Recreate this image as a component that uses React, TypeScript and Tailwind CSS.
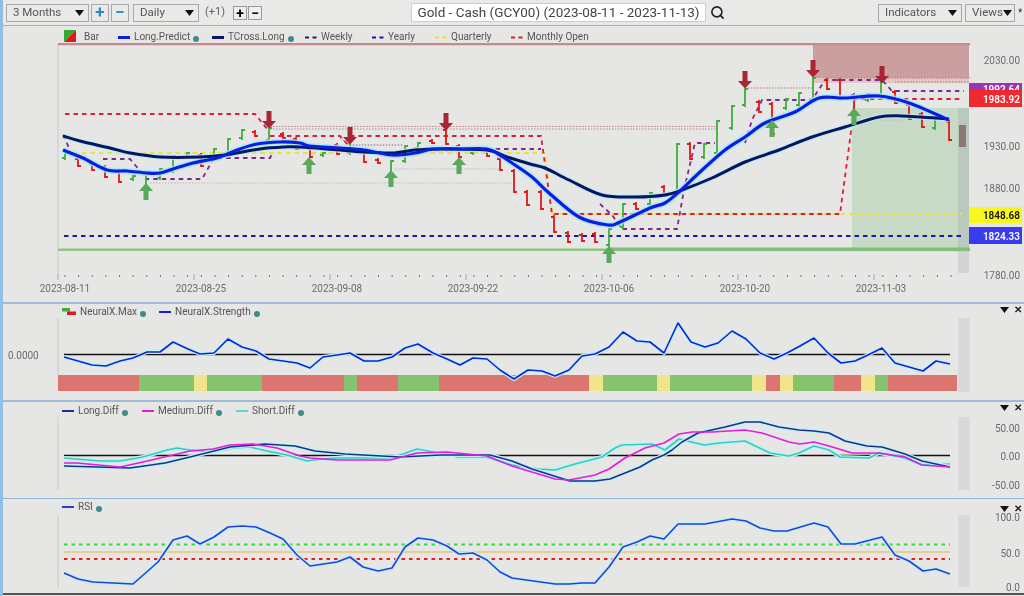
import React from 'react';
import { Search } from 'lucide-react';

// [x, high, low, colour] in page pixels
const bars: [number, number, number, 'g' | 'r'][] = [
  [65, 152, 160, 'g'], [78, 157, 167, 'r'], [92, 162, 171, 'r'], [105, 165, 178, 'r'], [119, 169, 183, 'r'],
  [133, 175, 181, 'g'], [146, 172, 190, 'g'], [160, 168, 180, 'g'], [173, 155, 173, 'g'], [187, 152, 159, 'g'],
  [201, 153, 167, 'r'], [214, 148, 158, 'g'], [228, 138, 158, 'g'], [242, 129, 140, 'g'], [255, 130, 137, 'r'],
  [269, 127, 142, 'g'], [283, 132, 139, 'r'], [296, 137, 150, 'r'], [310, 147, 158, 'r'], [323, 152, 157, 'g'],
  [337, 143, 155, 'r'], [350, 137, 155, 'g'], [364, 150, 163, 'r'], [378, 158, 164, 'r'], [391, 160, 178, 'g'],
  [405, 145, 163, 'g'], [418, 142, 150, 'g'], [432, 139, 144, 'r'], [446, 128, 145, 'r'], [459, 144, 158, 'r'],
  [473, 147, 155, 'g'], [487, 149, 157, 'r'], [500, 157, 171, 'r'], [514, 169, 193, 'r'], [527, 190, 206, 'r'],
  [541, 190, 210, 'r'], [554, 215, 233, 'r'], [568, 231, 243, 'r'], [582, 233, 242, 'r'], [595, 232, 243, 'r'],
  [609, 228, 247, 'g'], [623, 203, 229, 'g'], [636, 202, 210, 'r'], [650, 192, 206, 'g'], [664, 185, 197, 'r'],
  [677, 143, 197, 'g'], [690, 142, 160, 'r'], [704, 143, 159, 'g'], [717, 120, 155, 'g'], [732, 105, 130, 'g'],
  [745, 88, 107, 'g'], [759, 100, 113, 'r'], [772, 102, 135, 'r'], [786, 98, 110, 'g'], [799, 92, 107, 'g'],
  [813, 77, 101, 'g'], [827, 78, 90, 'r'], [840, 78, 100, 'r'], [854, 93, 125, 'r'], [868, 93, 102, 'g'],
  [881, 80, 97, 'g'], [895, 90, 104, 'r'], [909, 103, 120, 'r'], [922, 112, 128, 'r'], [935, 117, 130, 'g'],
  [949, 120, 141, 'r'],
];

const longPredict = '63,150 83,158 107,170 127,171 147,173 160,173 173,169 193,163 217,158 237,150 257,144 280,142 300,143 310,146 340,148 364,150 392,155 415,153 433,149 460,149 487,149 500,155 512,163 532,177 549,193 579,217 608,225 620,222 650,208 665,203 680,191 700,172 725,150 745,137 765,123 795,112 819,98 845,98 879,96 909,103 949,120';
const tCross = '63,136 80,141 110,148 130,153 160,157 200,157 225,155 260,149 285,147 300,147 340,150 364,152 392,153 415,150 440,149 487,150 507,157 530,164 545,168 569,180 602,195 635,197 665,195 682,190 712,178 745,162 779,150 812,137 845,127 879,117 902,116 949,119';
const neural = '64,357 92,365 106,366 120,361 133,358 147,352 160,352 173,342 188,349 200,354 214,353 228,339 242,347 256,351 269,359 283,361 297,363 310,368 323,357 337,355 350,353 364,361 378,361 392,357 405,348 418,344 433,353 447,359 460,365 473,358 487,359 500,370 514,379 528,370 542,371 555,376 569,370 582,356 595,354 609,347 623,332 637,341 650,342 664,353 678,323 691,342 705,347 718,343 732,331 746,339 760,353 774,359 787,353 800,346 814,338 828,353 841,363 855,361 868,355 882,348 895,363 909,367 923,371 936,361 950,364';
const longDiff = '64,466 130,468 165,463 190,457 230,447 265,444 295,446 315,451 345,454 400,457 440,455 490,455 512,461 532,469 570,481 595,481 610,479 640,467 652,460 664,455 672,450 682,442 698,433 725,427 745,422 760,422 779,427 799,430 814,431 829,433 845,441 867,446 882,447 905,454 922,461 950,467';
const mediumDiff = '64,463 77,463 120,467 143,462 173,455 190,451 213,449 230,445 253,444 277,448 300,456 310,458 337,460 390,460 417,453 447,452 487,456 512,466 555,479 569,480 595,475 609,469 625,458 645,448 664,443 679,434 692,432 712,432 745,430 762,433 789,442 800,444 814,442 829,446 852,453 879,453 905,457 922,465 950,467';
const shortDiff = '64,458 100,461 120,461 143,457 167,450 177,448 190,450 213,452 233,448 250,447 267,451 287,455 307,461 320,459 337,458 390,458 403,454 417,449 433,452 457,457 487,457 512,465 539,469 555,470 575,464 602,457 615,448 622,445 652,444 665,450 679,439 704,445 719,443 745,441 770,453 789,456 799,453 814,446 829,450 840,457 869,458 879,453 905,458 922,465 950,464';
const rsi = '64,574 78,580 93,583 133,585 158,563 173,541 187,537 200,545 214,538 228,528 242,527 256,528 270,534 283,540 297,556 310,567 337,563 350,558 363,568 378,572 392,569 405,548 418,539 433,541 447,547 459,555 473,554 487,561 500,573 512,579 555,585 569,585 582,584 595,584 609,568 623,548 637,543 650,537 664,540 678,525 705,525 732,520 746,522 760,529 774,532 787,532 814,524 828,528 841,545 855,545 882,538 895,556 909,562 923,572 936,570 950,575';

const strip: [number, number, string][] = [
  [58, 139, '#dc7470'], [139, 194, '#84c46e'], [194, 207, '#efe58a'], [207, 262, '#84c46e'], [262, 344, '#dc7470'],
  [344, 357, '#84c46e'], [357, 398, '#dc7470'], [398, 439, '#84c46e'], [439, 589, '#dc7470'], [589, 603, '#efe58a'],
  [603, 657, '#84c46e'], [657, 670, '#efe58a'], [670, 752, '#84c46e'], [752, 766, '#efe58a'], [766, 780, '#dc7470'],
  [780, 793, '#efe58a'], [793, 834, '#84c46e'], [834, 861, '#dc7470'], [861, 875, '#efe58a'], [875, 888, '#84c46e'],
  [888, 957, '#dc7470'],
];

const dates: [number, string][] = [
  [65, '2023-08-11'], [201, '2023-08-25'], [337, '2023-09-08'], [473, '2023-09-22'], [609, '2023-10-06'], [745, '2023-10-20'], [881, '2023-11-03'],
];

const minorTicks = Array.from({ length: 66 }, (_, i) => 65 + i * 13.63);

// catmull-rom through the points, the two moving averages are smooth in the chart
const smooth = (points: string) => {
  const p = points.split(' ').map((s) => s.split(',').map(Number));
  let d = `M${p[0][0]} ${p[0][1]}`;
  for (let i = 0; i < p.length - 1; i++) {
    const a = p[i - 1] ?? p[i];
    const b = p[i];
    const c = p[i + 1];
    const e = p[i + 2] ?? c;
    d += `C${b[0] + (c[0] - a[0]) / 6} ${b[1] + (c[1] - a[1]) / 6} ${c[0] - (e[0] - b[0]) / 6} ${c[1] - (e[1] - b[1]) / 6} ${c[0]} ${c[1]}`;
  }
  return d;
};

const UpArrow = ({ x, y }: { x: number; y: number }) => (
  <path d={`M${x} ${y}l7 8h-4.5v9h-5v-9h-4.5z`} fill="#5aa85a" />
);
const DownArrow = ({ x, y }: { x: number; y: number }) => (
  <path d={`M${x - 2.5} ${y}h5v10h4.5l-7 7.5l-7 -7.5h4.5z`} fill="#a82535" />
);

const Caret = () => (
  <svg width="9" height="6" viewBox="0 0 9 6" className="shrink-0">
    <path d="M0 0h9L4.5 6z" fill="#111" />
  </svg>
);

const Select = ({ label, className }: { label: string; className: string }) => (
  <div className={`flex h-[18px] items-center justify-between border border-[#a9a9a9] bg-[#e9e9e7] pl-[6px] pr-[4px] text-[11.5px] text-[#555] ${className}`}>
    <span>{label}</span>
    <Caret />
  </div>
);

const Dot = () => <span className="ml-[3px] mt-[4px] h-[6px] w-[6px] rounded-full bg-[#3f8a8a]" />;

const LineKey = ({ className }: { className: string }) => <span className={`mr-[4px] w-[12px] ${className}`} />;
const DashKey = ({ color }: { color: string }) => (
  <svg width="12" height="3" className="mr-[4px]"><line x1="0" x2="12" y1="1.5" y2="1.5" stroke={color} strokeWidth="2" strokeDasharray="4 3.5" /></svg>
);

const PanelControls = () => (
  <div className="ml-auto mr-[2px] flex items-center gap-[5px] self-start pt-[3px]">
    <Caret />
    <span className="text-[10px] font-bold leading-none text-[#222]">✕</span>
  </div>
);

const Line = ({ points, color, width = 1.6 }: { points: string; color: string; width?: number }) => (
  <>
    <polyline points={points} fill="none" stroke="#bff3f3" strokeWidth={width + 2.4} strokeLinejoin="round" />
    <polyline points={points} fill="none" stroke={color} strokeWidth={width} strokeLinejoin="round" />
  </>
);

const AxisText = ({ y, children }: { y: number; children: string }) => (
  <text x="1020" y={y} textAnchor="end" fontSize="10" fill="#6b6b6b">{children}</text>
);

const MainChart = () => (
  <svg width="1021" height="259" viewBox="3 43 1021 259" className="block">
    <rect x="813" y="45" width="156" height="33" fill="#cb9fa0" />
    <rect x="813" y="78" width="156" height="5" fill="#e0c6c6" />
    <rect x="852" y="108" width="117" height="141" fill="#c7dac5" />
    <rect x="958" y="108" width="11" height="141" fill="#b9c9bd" />
    <rect x="958" y="249" width="11" height="24" fill="#d3d3d3" />
    <rect x="959" y="125" width="7" height="22" fill="#8c7676" />
    <line x1="58" x2="58" y1="45" y2="276" stroke="#c8c8c8" />
    <line x1="58" x2="970" y1="44" y2="44" stroke="#c9868d" strokeWidth="2.4" />

    {/* levels */}
    <g fill="none" strokeWidth="1" strokeDasharray="1.5 1.5">
      <path d="M270 126.5H716M270 129H716" stroke="#b88" />
      <path d="M745 88H813M825 78H970M895 82H970" stroke="#b77" />
      <path d="M150 183H513M395 169H500M850 120H905" stroke="#b9bfb0" />
      <path d="M340 138L350 145H403" stroke="#968" />
    </g>
    <g fill="none" strokeWidth="1.8" strokeDasharray="4.5 4">
      <path d="M65 153H545L552 213" stroke="#e6e62c" />
      <path d="M552 214H962" stroke="#efe23a" />
      <path d="M64 236H964" stroke="#1a1aa8" />
      <path d="M65 114H255L268 130M270 136H340L350 147M350 136H541L552 214H840L849 147L855 99H962" stroke="#d91e35" />
      <path d="M63 135L70 150M103 159H130L147 179H202L214 158H270L273 152M487 149H541M600 204L612 215L622 229H677L684 190L695 143H715M745 143L752 120L762 100H812L825 80H882L892 91H964" stroke="#7b2a8c" />
    </g>
    <rect x="58" y="248.5" width="912" height="2.4" fill="#89c67c" />
    <rect x="609" y="247.5" width="361" height="3.6" fill="#82bd7c" />

    {/* price bars */}
    {bars.map(([x, h, l, c]) => {
      const color = c === 'g' ? '#3fae3f' : '#e01818';
      const open = c === 'g' ? l - 2 : h + 2;
      const close = c === 'g' ? h + 1 : l - 1;
      return (
        <path key={x} d={`M${x} ${h}V${l}M${x - 3} ${open}H${x}M${x} ${close}H${x + 3}`} fill="none" stroke={color} strokeWidth="1.8" />
      );
    })}

    <path d={smooth(longPredict)} fill="none" stroke="#9fe8fb" strokeWidth="6.5" opacity=".75" />
    <path d={smooth(tCross)} fill="none" stroke="#b5f0f6" strokeWidth="5.5" opacity=".75" />
    <path d={smooth(tCross)} fill="none" stroke="#0a1460" strokeWidth="3" />
    <path d={smooth(longPredict)} fill="none" stroke="#0a1ee0" strokeWidth="3.2" />

    {[[146, 183], [309, 157], [391, 170], [459, 157], [609, 246], [854, 108], [772, 120]].map(([x, y]) => (
      <UpArrow key={x} x={x} y={y} />
    ))}
    {[[269, 111], [350, 127], [446, 113], [745, 71], [813, 60], [882, 66]].map(([x, y]) => (
      <DownArrow key={x} x={x} y={y} />
    ))}

    {/* date axis */}
    {minorTicks.map((x) => (
      <line key={x} x1={x} x2={x} y1="275" y2="277" stroke="#777" />
    ))}
    {[58, 194, 330, 466, 602, 738, 874].map((x) => (
      <line key={x} x1={x} x2={x} y1="274" y2="280" stroke="#aaa" />
    ))}
    {dates.map(([x, d]) => (
      <text key={d} x={x} y="292" textAnchor="middle" fontSize="10" fill="#6b6b6b">{d}</text>
    ))}
    <AxisText y={64}>2030.00</AxisText>
    <AxisText y={150}>1930.00</AxisText>
    <AxisText y={192}>1880.00</AxisText>
    <AxisText y={279}>1780.00</AxisText>

    {/* last value tags */}
    <rect x="969" y="83" width="53" height="8" fill="#9b35b0" />
    <text x="1020" y="93" textAnchor="end" fontSize="10" fontWeight="600" fill="#fff">1992.64</text>
    <rect x="969" y="90" width="53" height="17" fill="#ee2a2e" />
    <text x="1020" y="103" textAnchor="end" fontSize="10" fontWeight="600" fill="#fff">1983.92</text>
    <rect x="969" y="207" width="53" height="16" fill="#f8f820" />
    <text x="1020" y="219" textAnchor="end" fontSize="10" fontWeight="600" fill="#111">1848.68</text>
    <rect x="969" y="227" width="53" height="17" fill="#3a3af0" />
    <text x="1020" y="240" textAnchor="end" fontSize="10" fontWeight="600" fill="#fff">1824.33</text>
  </svg>
);

const NeuralChart = () => (
  <svg width="1021" height="80" viewBox="3 318 1021 80" className="block">
    <rect x="958" y="318" width="12" height="74" fill="#d9d9dc" />
    <line x1="58" x2="58" y1="318" y2="375" stroke="#c8c8c8" />
    {strip.map(([a, b, c]) => (
      <rect key={a} x={a} y="375" width={b - a} height="16" fill={c} />
    ))}
    <line x1="64" x2="950" y1="354.5" y2="354.5" stroke="#111" strokeWidth="1.4" />
    <Line points={neural} color="#1420d8" />
    <text x="8" y="359" fontSize="10" fill="#6b6b6b">0.0000</text>
  </svg>
);

const DiffChart = () => (
  <svg width="1021" height="79" viewBox="3 417 1021 79" className="block">
    <rect x="958" y="417" width="12" height="73" fill="#d9d9dc" />
    <line x1="58" x2="58" y1="417" y2="490" stroke="#c8c8c8" />
    <line x1="64" x2="950" y1="455.5" y2="455.5" stroke="#111" strokeWidth="1.4" />
    <Line points={shortDiff} color="#38c9c0" />
    <Line points={longDiff} color="#1c2f8c" />
    <polyline points={mediumDiff} fill="none" stroke="#e21ce0" strokeWidth="1.6" strokeLinejoin="round" />
    <AxisText y={432}>50.00</AxisText>
    <AxisText y={460}>0.00</AxisText>
    <AxisText y={489}>-50.00</AxisText>
  </svg>
);

const RsiChart = () => (
  <svg width="1021" height="82" viewBox="3 512 1021 82" className="block">
    <rect x="958" y="516" width="12" height="72" fill="#d9d9dc" />
    <line x1="58" x2="58" y1="516" y2="589" stroke="#c8c8c8" />
    <line x1="64" x2="950" y1="545.5" y2="545.5" stroke="#2fe02f" strokeWidth="1.8" strokeDasharray="3.5 4" />
    <line x1="64" x2="950" y1="553" y2="553" stroke="#efb040" strokeWidth="1.2" />
    <line x1="64" x2="950" y1="560" y2="560" stroke="#ec1c1c" strokeWidth="1.8" strokeDasharray="3.5 4" />
    <Line points={rsi} color="#2c3cd8" />
    <AxisText y={522}>100.0</AxisText>
    <AxisText y={558}>50.0</AxisText>
    <AxisText y={592}>0.0</AxisText>
  </svg>
);

export default function App() {
  return (
    <div className="flex h-[596px] w-[1024px] overflow-hidden bg-[#e6e6e4] font-['Roboto','Noto_Sans',sans-serif] blur-[0.5px]">
      <div className="w-[3px] shrink-0 bg-[#8fbfe4]" />
      <div className="flex w-[1021px] flex-col">
        {/* Toolbar */}
        <div className="flex h-[26px] items-center border-b-[1.5px] border-[#8fb6d6] bg-[#e9e9e7] pl-[3px]">
          <Select label="3 Months" className="w-[83px]" />
          <button className="ml-[2px] flex h-[18px] w-[18px] items-center justify-center border border-[#a9a9a9] text-[17px] font-bold leading-none text-[#2a8ac8]">+</button>
          <button className="ml-[2px] flex h-[18px] w-[18px] items-center justify-center border border-[#a9a9a9] text-[17px] font-bold leading-none text-[#2a8ac8]">−</button>
          <Select label="Daily" className="ml-[4px] w-[66px]" />
          <span className="ml-[6px] text-[11px] text-[#666]">(+1)</span>
          <button className="ml-[8px] flex h-[14px] w-[14px] items-center justify-center border border-[#999] bg-[#eee] text-[14px] font-bold leading-none text-black">+</button>
          <button className="ml-[1px] flex h-[14px] w-[14px] items-center justify-center border border-[#999] bg-[#eee] text-[14px] font-bold leading-none text-black">−</button>
          <div className="ml-[149px] flex h-[19px] w-[295px] items-center justify-center whitespace-nowrap rounded-[2px] border border-[#ccc] bg-white text-[13.5px] text-[#444]">
            Gold - Cash (GCY00) (2023-08-11 - 2023-11-13)
          </div>
          <Search size={15} strokeWidth={2.6} className="ml-[4px] text-[#222]" />
          <Select label="Indicators" className="ml-[153px] w-[84px]" />
          <Select label="Views" className="ml-[3px] w-[50px]" />
          <span className="ml-[3px] text-[10px] text-[#333]">*</span>
        </div>

        {/* Price panel */}
        <div className="flex h-[276px] flex-col">
          <div className="flex h-[17px] items-end pl-[61px] text-[10px] leading-[12px] text-[#555]">
            <span className="mb-[1px] w-[20px]">
              <svg width="12" height="12" viewBox="0 0 12 12" className="block">
                <path d="M0 0h12L0 12z" fill="#35a835" />
                <path d="M12 0v12H0z" fill="#e01818" />
              </svg>
            </span>
            <span className="w-[34px]">Bar</span>
            <span className="flex w-[94px] items-center"><LineKey className="h-[3px] bg-[#0a1ee0]" />Long.Predict<Dot /></span>
            <span className="flex w-[93px] items-center"><LineKey className="h-[3px] bg-[#0a1460]" />TCross.Long<Dot /></span>
            <span className="flex w-[67px] items-center"><DashKey color="#3a1a4a" />Weekly</span>
            <span className="flex w-[63px] items-center"><DashKey color="#1a1aa8" />Yearly</span>
            <span className="flex w-[76px] items-center"><DashKey color="#e6e62c" />Quarterly</span>
            <span className="flex items-center"><DashKey color="#d91e35" />Monthly Open</span>
          </div>
          <MainChart />
        </div>

        {/* NeuralX panel */}
        <div className="flex h-[98px] flex-col border-t-[2px] border-[#9dbcd6]">
          <div className="-mt-[2px] flex h-[16px] shrink-0 items-end pl-[59px] text-[10px] leading-[12px] text-[#555]">
            <svg width="14" height="8" viewBox="0 0 14 8" className="mb-[2px] mr-[4px]">
              <rect width="8" height="3.5" fill="#3fae3f" />
              <rect x="5" y="3.5" width="9" height="3.5" fill="#e01818" />
            </svg>
            <span className="flex w-[79px] items-center">NeuralX.Max<Dot /></span>
            <span className="flex items-center"><LineKey className="h-[2px] bg-[#1420d8]" />NeuralX.Strength<Dot /></span>
            <PanelControls />
          </div>
          <NeuralChart />
        </div>

        {/* Diff panel */}
        <div className="flex h-[98px] flex-col border-t-[2px] border-[#9dbcd6]">
          <div className="-mt-[2px] flex h-[17px] shrink-0 items-end pl-[59px] text-[10px] leading-[12px] text-[#555]">
            <span className="flex w-[80px] items-center"><LineKey className="h-[2px] bg-[#1c2f8c]" />Long.Diff<Dot /></span>
            <span className="flex w-[94px] items-center"><LineKey className="h-[2px] bg-[#e21ce0]" />Medium.Diff<Dot /></span>
            <span className="flex items-center"><LineKey className="h-[2px] bg-[#5fd8cc]" />Short.Diff<Dot /></span>
            <PanelControls />
          </div>
          <DiffChart />
        </div>

        {/* RSI panel */}
        <div className="flex h-[98px] flex-col border-t-[1.5px] border-[#8fb6d6]">
          <div className="flex h-[12px] shrink-0 items-start pl-[59px] pt-[2px] text-[10px] leading-[12px] text-[#555]">
            <span className="flex items-center"><LineKey className="h-[2px] bg-[#2c3cd8]" />RSI<Dot /></span>
            <PanelControls />
          </div>
          <RsiChart />
          <div className="h-[2px] shrink-0 bg-[#555]" />
        </div>
      </div>
    </div>
  );
}
